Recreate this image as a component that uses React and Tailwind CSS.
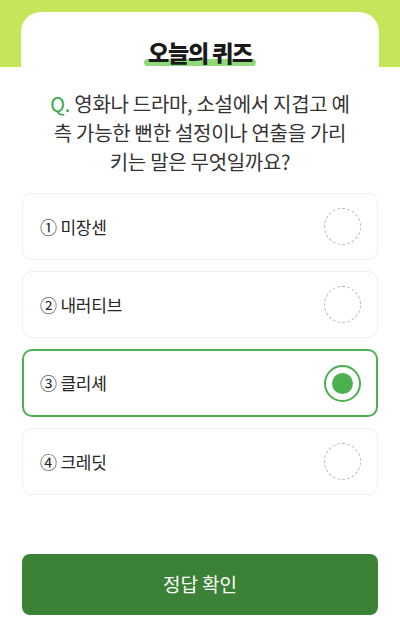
const options = [
  { no: "①", label: "미장센" },
  { no: "②", label: "내러티브" },
  { no: "③", label: "클리셰" },
  { no: "④", label: "크레딧" },
];

function Radio({ checked }) {
  if (checked) {
    return (
      <span className="flex h-[37px] w-[37px] items-center justify-center rounded-full border-2 border-[#4caf50]">
        <span className="h-[21px] w-[21px] rounded-full bg-[#4caf50]" />
      </span>
    );
  }
  return <span className="h-[37px] w-[37px] rounded-full border border-dashed border-[#b5b5b5]" />;
}

export default function App() {
  const selected = 2;

  return (
    <div className="min-h-[629px] w-[400px] bg-white font-['Noto_Sans_CJK_KR','Noto_Sans',sans-serif] text-[#333]">
      <div className="h-[67px] bg-[#c5e65a]" />
      <div className="mx-[21px] -mt-[55px] rounded-t-[20px] bg-white">
        <div className="flex justify-center pt-[25px]">
          <div className="relative">
            <span className="absolute bottom-[1px] left-[-4px] right-[-4px] h-[7px] rounded-full bg-[#8fd979]" />
            <h1 className="relative text-[23px] font-black leading-[30px] tracking-[-1.2px] text-[#1a1a1a]">
              오늘의 퀴즈
            </h1>
          </div>
        </div>

        <p className="mt-[22px] px-[28px] text-center text-[20px] leading-[29px] tracking-[-0.3px] text-[#333]">
          <span className="text-[#3aa64a]">Q.</span> 영화나 드라마, 소설에서 지겹고 예측 가능한 뻔한 설정이나 연출을 가리키는 말은 무엇일까요?
        </p>
      </div>

      <div className="mx-[22px] mt-[17px] flex flex-col gap-[11px]">
        {options.map((o, i) => (
          <div
            key={o.label}
            className={
              i === selected
                ? "flex h-[68px] items-center justify-between rounded-[10px] border-2 border-[#4caf50] bg-white pl-[16px] pr-[15px]"
                : "flex h-[67px] items-center justify-between rounded-[10px] border border-[#eeeef5] bg-white pl-[17px] pr-[16px]"
            }
          >
            <span className="text-[17px] tracking-[-0.2px] text-[#262626]">
              {o.no} {o.label}
            </span>
            <Radio checked={i === selected} />
          </div>
        ))}
      </div>

      <div className="mx-[22px] mt-[59px]">
        <button
          type="button"
          className="flex h-[61px] w-full items-center justify-center rounded-[8px] bg-[#3b8236] text-[19px] text-white"
        >
          정답 확인
        </button>
      </div>
    </div>
  );
}
